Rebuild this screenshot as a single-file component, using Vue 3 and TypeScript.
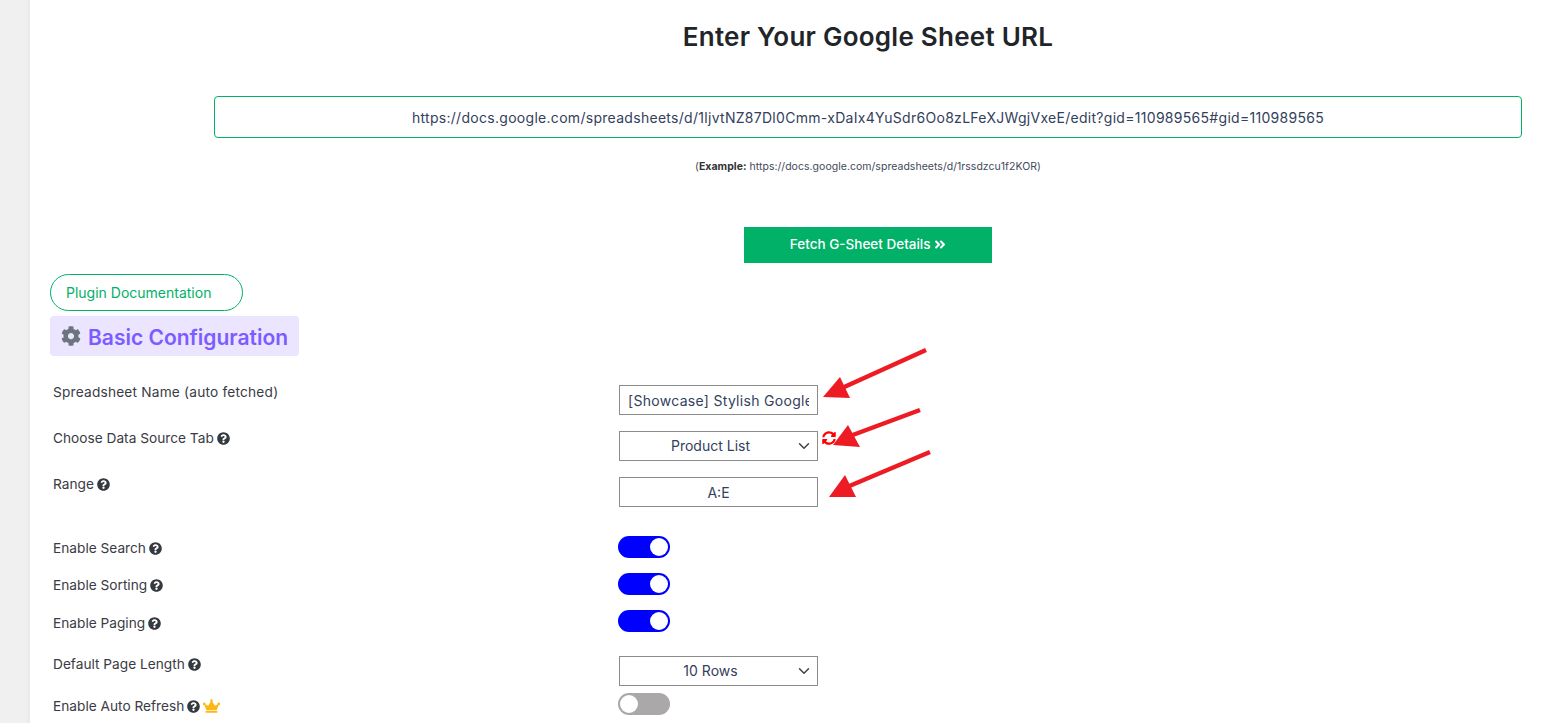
<script setup lang="ts">
type Row = { label: string; help?: boolean; crown?: boolean }

const toggles: Row[] = [
  { label: 'Enable Search', help: true },
  { label: 'Enable Sorting', help: true },
  { label: 'Enable Paging', help: true },
]

const helpPath =
  'M504 256c0 136.997-111.043 248-248 248S8 392.997 8 256C8 119.083 119.043 8 256 8s248 111.083 248 248zM262.655 90c-54.497 0-89.255 22.957-116.549 63.758-3.536 5.286-2.353 12.415 2.715 16.258l34.699 26.31c5.205 3.947 12.621 3.008 16.665-2.122 17.864-22.658 30.113-35.797 57.303-35.797 20.429 0 45.698 13.148 45.698 32.958 0 14.976-12.363 22.667-32.534 33.976C247.128 238.528 216 254.941 216 296v4c0 6.627 5.373 12 12 12h56c6.627 0 12-5.373 12-12v-1.333c0-28.462 83.186-29.647 83.186-106.667 0-58.002-60.165-102-116.531-102zM256 338c-25.365 0-46 20.635-46 46 0 25.364 20.635 46 46 46s46-20.636 46-46c0-25.365-20.635-46-46-46z'
</script>

<template>
  <div class="page">
    <main class="content">
      <section class="url-section">
        <h1 class="title">Enter Your Google Sheet URL</h1>
        <input
          class="url-input"
          type="text"
          value="https://docs.google.com/spreadsheets/d/1ljvtNZ87Dl0Cmm-xDaIx4YuSdr6Oo8zLFeXJWgjVxeE/edit?gid=110989565#gid=110989565"
        />
        <p class="example">(<b>Example:</b> https://docs.google.com/spreadsheets/d/1rssdzcu1f2KOR)</p>
        <button class="fetch-btn" type="button">
          Fetch G-Sheet Details
          <svg class="fetch-icon" viewBox="0 0 448 512"><path fill="#fff" d="M224.3 273l-136 136c-9.4 9.4-24.6 9.4-33.9 0l-22.6-22.6c-9.4-9.4-9.4-24.6 0-33.9l96.4-96.4-96.4-96.4c-9.4-9.4-9.4-24.6 0-33.9L54.3 103c9.4-9.4 24.6-9.4 33.9 0l136 136c9.5 9.4 9.5 24.6.1 34zm192-34l-136-136c-9.4-9.4-24.6-9.4-33.9 0l-22.6 22.6c-9.4 9.4-9.4 24.6 0 33.9l96.4 96.4-96.4 96.4c-9.4 9.4-9.4 24.6 0 33.9l22.6 22.6c9.4 9.4 24.6 9.4 33.9 0l136-136c9.4-9.2 9.4-24.4 0-33.8z" /></svg>
        </button>
      </section>

      <a class="doc-link">Plugin Documentation</a>

      <h2 class="section-title">
        <svg class="cog" viewBox="0 0 512 512"><path fill="#6c757d" d="M487.4 315.7l-42.6-24.6c4.3-23.2 4.3-47 0-70.2l42.6-24.6c4.9-2.8 7.1-8.6 5.5-14-11.1-35.6-30-67.8-54.7-94.6-3.8-4.1-10-5.1-14.8-2.3L380.8 110c-17.9-15.4-38.5-27.3-60.8-35.1V25.8c0-5.6-3.9-10.5-9.4-11.7-36.7-8.2-74.3-7.8-109.2 0-5.5 1.2-9.4 6.1-9.4 11.7V75c-22.2 7.9-42.8 19.8-60.8 35.1L88.7 85.5c-4.9-2.8-11-1.9-14.8 2.3-24.7 26.7-43.6 58.9-54.7 94.6-1.7 5.4.6 11.2 5.5 14L67.3 221c-4.3 23.2-4.3 47 0 70.2l-42.6 24.6c-4.9 2.8-7.1 8.6-5.5 14 11.1 35.6 30 67.8 54.7 94.6 3.8 4.1 10 5.1 14.8 2.3l42.6-24.6c17.9 15.4 38.5 27.3 60.8 35.1v49.2c0 5.6 3.9 10.5 9.4 11.7 36.7 8.2 74.3 7.8 109.2 0 5.5-1.2 9.4-6.1 9.4-11.7v-49.2c22.2-7.9 42.8-19.8 60.8-35.1l42.6 24.6c4.9 2.8 11 1.9 14.8-2.3 24.7-26.7 43.6-58.9 54.7-94.6 1.5-5.5-.7-11.3-5.6-14.1zM256 336c-44.1 0-80-35.9-80-80s35.9-80 80-80 80 35.9 80 80-35.9 80-80 80z" /></svg>
        <span class="section-text">Basic Configuration</span>
      </h2>

      <div class="fields">
        <div class="row">
          <label class="label label-wide">Spreadsheet Name (auto fetched)</label>
          <input class="field name-field" type="text" value="[Showcase] Stylish Google Sheet Integration" />
        </div>
        <div class="row">
          <label class="label">
            Choose Data Source Tab
            <svg class="help" viewBox="0 0 512 512"><path :d="helpPath" /></svg>
          </label>
          <div class="control">
            <select class="field select-field"><option>Product List</option></select>
            <svg class="sync" viewBox="0 0 512 512"><path fill="#ff0000" d="M370.72 133.28C339.458 104.008 298.888 87.962 255.848 88c-77.458.068-144.328 53.178-162.791 126.85-1.344 5.363-6.122 9.15-11.651 9.15H24.103c-7.498 0-13.194-6.807-11.807-14.176C33.933 94.924 134.813 8 256 8c66.448 0 126.791 26.136 171.315 68.685L463.03 40.97C478.149 25.851 504 36.559 504 57.941V192c0 13.255-10.745 24-24 24H345.941c-21.382 0-32.09-25.851-16.971-40.971l41.75-41.749zM32 296h134.059c21.382 0 32.09 25.851 16.971 40.971l-41.75 41.75c31.262 29.273 71.835 45.319 114.876 45.28 77.418-.07 144.315-53.144 162.787-126.849 1.344-5.363 6.122-9.15 11.651-9.15h57.304c7.498 0 13.194 6.807 11.807 14.176C478.067 417.076 377.187 504 256 504c-66.448 0-126.791-26.136-171.315-68.685L48.97 471.03C33.851 486.149 8 475.441 8 454.059V320c0-13.255 10.745-24 24-24z" /></svg>
          </div>
        </div>
        <div class="row">
          <label class="label">
            Range
            <svg class="help" viewBox="0 0 512 512"><path :d="helpPath" /></svg>
          </label>
          <input class="field range-field" type="text" value="A:E" />
        </div>
      </div>

      <div class="toggles">
        <div v-for="row in toggles" :key="row.label" class="row">
          <label class="label label-toggle">
            {{ row.label }}
            <svg class="help" viewBox="0 0 512 512"><path :d="helpPath" /></svg>
          </label>
          <span class="switch on"><i class="knob"></i></span>
        </div>
      </div>

      <div class="row page-length">
        <label class="label label-select">
          Default Page Length
          <svg class="help" viewBox="0 0 512 512"><path :d="helpPath" /></svg>
        </label>
        <select class="field select-field"><option>10 Rows</option></select>
      </div>

      <div class="row auto-refresh">
        <label class="label label-toggle">
          Enable Auto Refresh
          <svg class="help" viewBox="0 0 512 512"><path :d="helpPath" /></svg>
          <svg class="crown" viewBox="0 0 640 512"><path fill="#fdb714" d="M528 448H112c-8.8 0-16 7.2-16 16v32c0 8.8 7.2 16 16 16h416c8.8 0 16-7.2 16-16v-32c0-8.8-7.2-16-16-16zm64-320c-26.5 0-48 21.5-48 48 0 7.1 1.6 13.7 4.4 19.8L476 239.2c-15.4 9.2-35.3 4-44.2-11.6L350.3 85C361 76.2 368 63 368 48c0-26.5-21.5-48-48-48s-48 21.5-48 48c0 15 7 28.2 17.7 37l-81.5 142.6c-8.9 15.6-28.9 20.8-44.2 11.6l-72.3-43.4c2.7-6 4.4-12.7 4.4-19.8 0-26.5-21.5-48-48-48S0 149.5 0 176s21.5 48 48 48c2.6 0 5.2-.4 7.7-.8L128 416h384l72.3-192.8c2.5.4 5.1.8 7.7.8 26.5 0 48-21.5 48-48s-21.5-48-48-48z" /></svg>
        </label>
        <span class="switch"><i class="knob"></i></span>
      </div>

      <!-- red annotation arrows drawn over the screenshot -->
      <svg class="arrows" width="1556" height="723" viewBox="0 0 1556 723">
        <g fill="#ed1c24" stroke="none">
          <polygon points="823,397 840,377 850,398" />
          <polygon points="833,445 848,425 860,447" />
          <polygon points="829,497 845,475 856,497" />
        </g>
        <g stroke="#ed1c24" stroke-width="4.5" fill="none">
          <line x1="926" y1="350" x2="842" y2="388" />
          <line x1="920" y1="410" x2="850" y2="436" />
          <line x1="930" y1="452" x2="847" y2="487" />
        </g>
      </svg>
    </main>
  </div>
</template>

<style>
html,
body {
  margin: 0;
  height: 723px;
  overflow: hidden;
  background: #fff;
}
</style>

<style scoped>
.page {
  height: 723px;
  overflow: hidden;
  background: linear-gradient(90deg, #f0f0f0 0, #f0f0f0 26px, #e9e9e9 30px, #fff 30px);
  font-family: Inter, "Noto Sans", Roboto, sans-serif;
  color: #3a3b45;
}

.content {
  padding: 0 34px 0 50px;
}

.url-section {
  margin-left: 164px;
  display: flex;
  flex-direction: column;
  align-items: center;
}

.title {
  margin: 21px 0 0;
  font-size: 26px;
  line-height: 32px;
  font-weight: 600;
  color: #212529;
  letter-spacing: 0.25px;
}

.url-input {
  box-sizing: border-box;
  width: 100%;
  height: 42px;
  margin-top: 43px;
  padding: 0 12px;
  border: 1px solid #00b167;
  border-radius: 4px;
  outline: none;
  background: #fff;
  font: 400 14px/20px Inter, "Noto Sans", sans-serif;
  letter-spacing: 0.29px;
  color: #33415c;
  text-align: center;
}

.example {
  margin: 22px 0 0;
  font-size: 10.5px;
  line-height: 14px;
  letter-spacing: 0.03px;
  color: #3f4a5c;
}

.example b {
  font-weight: 700;
  color: #333;
}

.fetch-btn {
  box-sizing: border-box;
  width: 248px;
  height: 36px;
  margin-top: 53px;
  border: 0;
  background: #00b167;
  color: #fff;
  font: 500 13.5px/34px Inter, "Noto Sans", sans-serif;
  padding: 0 0 2px;
}

.fetch-icon {
  width: 12px;
  height: 13px;
  vertical-align: -1.5px;
}

.doc-link {
  display: block;
  box-sizing: border-box;
  width: 193px;
  height: 37px;
  margin-top: 11px;
  padding-left: 15px;
  border: 1px solid #00b167;
  border-radius: 19px;
  color: #00b167;
  font-size: 14px;
  line-height: 35px;
}

.section-title {
  display: flex;
  align-items: center;
  gap: 7px;
  box-sizing: border-box;
  width: 249px;
  height: 40px;
  margin: 5px 0 0;
  padding-left: 11px;
  border-radius: 4px;
  background: #ebe5ff;
  color: #7c5cff;
  font-size: 21px;
  font-weight: 600;
  white-space: nowrap;
}

.section-text {
  padding-top: 2px;
}

.cog {
  width: 20px;
  height: 20px;
  flex: none;
}

.fields {
  display: flex;
  flex-direction: column;
  gap: 16px;
  margin-top: 29px;
}

.toggles {
  display: flex;
  flex-direction: column;
  gap: 15px;
  margin-top: 29px;
}

.toggles .row:last-child .label-toggle,
.auto-refresh .label-toggle {
  padding-top: 6px;
}

.page-length {
  margin-top: 24px;
}

.auto-refresh {
  margin-top: 7px;
}

.row {
  display: flex;
  align-items: flex-start;
}

.label {
  box-sizing: border-box;
  width: 568px;
  flex: none;
  padding-left: 3px;
  font-size: 13.7px;
  line-height: 14px;
  color: #3a3b45;
  white-space: nowrap;
}

.label-wide {
  letter-spacing: 0.2px;
}

.label-toggle {
  padding-top: 5px;
}

.label-select {
  padding-top: 1px;
}

.help {
  width: 13px;
  height: 13px;
  margin-left: -1px;
  vertical-align: -2px;
  fill: #343a40;
}

.crown {
  width: 17px;
  height: 14px;
  margin-left: 3px;
  vertical-align: -2px;
}

.control {
  display: flex;
  align-items: flex-start;
}

.field {
  box-sizing: border-box;
  width: 199px;
  height: 30px;
  margin-left: 1px;
  border: 1px solid #8c8c8c;
  border-radius: 0;
  outline: none;
  background: #fff;
  font: 400 14px/20px Inter, "Noto Sans", sans-serif;
  color: #33415c;
}

.name-field {
  padding: 0 8px;
  letter-spacing: 0.3px;
}

.range-field {
  text-align: center;
}

.select-field {
  appearance: none;
  padding: 0 16px 0 0;
  text-align: center;
  background: #fff url("data:image/svg+xml,%3Csvg xmlns='http://www.w3.org/2000/svg' viewBox='0 0 16 16'%3E%3Cpath fill='none' stroke='%23444' stroke-width='2' stroke-linecap='round' stroke-linejoin='round' d='M2 5l6 6 6-6'/%3E%3C/svg%3E") no-repeat right 7px center / 12px 12px;
}

.sync {
  width: 14px;
  height: 14px;
  margin: 0 0 0 4px;
}

.switch {
  position: relative;
  display: block;
  box-sizing: border-box;
  width: 52px;
  height: 22px;
  border-radius: 11px;
  background: #aaa8a8;
}

.switch.on {
  background: #0000ff;
}

.knob {
  position: absolute;
  top: 2px;
  left: 2px;
  width: 18px;
  height: 18px;
  border-radius: 50%;
  background: #fff;
}

.switch.on .knob {
  left: 32px;
}

.arrows {
  position: absolute;
  top: 0;
  left: 0;
  pointer-events: none;
}
</style>
